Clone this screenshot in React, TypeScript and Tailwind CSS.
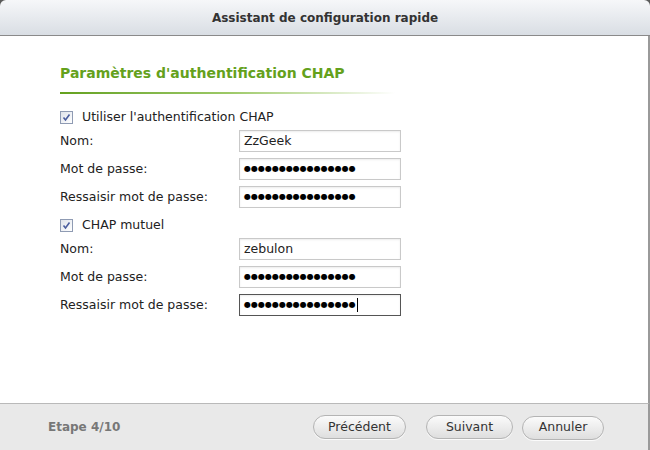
import React from "react";

const font = { fontFamily: "Tahoma, 'DejaVu Sans', Verdana, sans-serif" };

function Check({ label, className = "" }: { label: string; className?: string }) {
  return (
    <div className={`flex h-[20px] items-center ${className}`}>
      <span className="flex h-[13px] w-[13px] items-center justify-center border border-[#8f9bb3] bg-gradient-to-br from-[#dfe3ea] to-white">
        <svg width="9" height="9" viewBox="0 0 9 9">
          <path d="M1.5 4.5 L3.5 7 L7.5 1.5" fill="none" stroke="#4a5d9e" strokeWidth="1.6" />
        </svg>
      </span>
      <span className="ml-[9px] text-[12.5px] text-[#222]">{label}</span>
    </div>
  );
}

function Field({ label, value, password, focused }: { label: string; value: string; password?: boolean; focused?: boolean }) {
  return (
    <div className="flex h-[28px] items-center">
      <span className="w-[179px] text-[12.5px] text-[#222]">{label}</span>
      <div
        className={`flex h-[22px] w-[162px] items-center border bg-white px-[4px] shadow-[inset_0_1px_2px_rgba(0,0,0,0.08)] ${
          focused ? "border-[#555]" : "border-[#c9c9c9]"
        }`}
      >
        {password ? (
          <span className="text-[8px] leading-none text-black">{value}</span>
        ) : (
          <span className="text-[12.5px] text-[#222]">{value}</span>
        )}
        {focused && <span className="ml-[1px] h-[14px] w-px bg-black" />}
      </div>
    </div>
  );
}

function Btn({ children, w }: { children: React.ReactNode; w: string }) {
  return (
    <button
      className={`h-[24px] ${w} rounded-full border border-[#b4b4b4] bg-gradient-to-b from-[#fbfbfb] to-[#dedede] text-[12.5px] text-[#333] shadow-[0_1px_0_rgba(255,255,255,0.8)]`}
    >
      {children}
    </button>
  );
}

export default function App() {
  const dots = "●".repeat(16);
  return (
    <div style={font} className="flex h-[450px] w-[650px] flex-col overflow-hidden bg-[#5a5a5a]">
      <div className="flex h-[36px] items-center justify-center rounded-t-[6px] border-b border-[#8a8a8a] bg-gradient-to-b from-[#f6f7f9] to-[#d9dee4]">
        <span className="text-[12px] font-bold text-[#333]">Assistant de configuration rapide</span>
      </div>
      <div className="flex flex-1 flex-col border-r-2 border-[#9a9a9a] bg-white pl-[60px] pt-[27px]">
        <div className="text-[14px] font-bold text-[#64a11c]">Paramètres d'authentification CHAP</div>
        <div className="mt-[8px] h-[2px] w-[335px] bg-gradient-to-r from-[#64a11c] via-[#9cc866] to-transparent" />
        <div className="mt-[13px]">
          <Check label="Utiliser l'authentification CHAP" />
          <Field label="Nom:" value="ZzGeek" />
          <Field label="Mot de passe:" value={dots} password />
          <Field label="Ressaisir mot de passe:" value={dots} password />
          <Check label="CHAP mutuel" className="mt-[4px]" />
          <Field label="Nom:" value="zebulon" />
          <Field label="Mot de passe:" value={dots} password />
          <Field label="Ressaisir mot de passe:" value={dots} password focused />
        </div>
      </div>
      <div className="flex h-[47px] items-center border-t border-[#b9b9b9] border-r-2 border-r-[#9a9a9a] bg-[#e9e9e9] pl-[48px] pr-[44px]">
        <span className="text-[12px] font-bold text-[#777]">Etape 4/10</span>
        <div className="ml-auto flex gap-[20px]">
          <Btn w="w-[93px]">Précédent</Btn>
          <Btn w="w-[87px]">Suivant</Btn>
        </div>
        <div className="ml-[9px]">
          <Btn w="w-[82px]">Annuler</Btn>
        </div>
      </div>
    </div>
  );
}
